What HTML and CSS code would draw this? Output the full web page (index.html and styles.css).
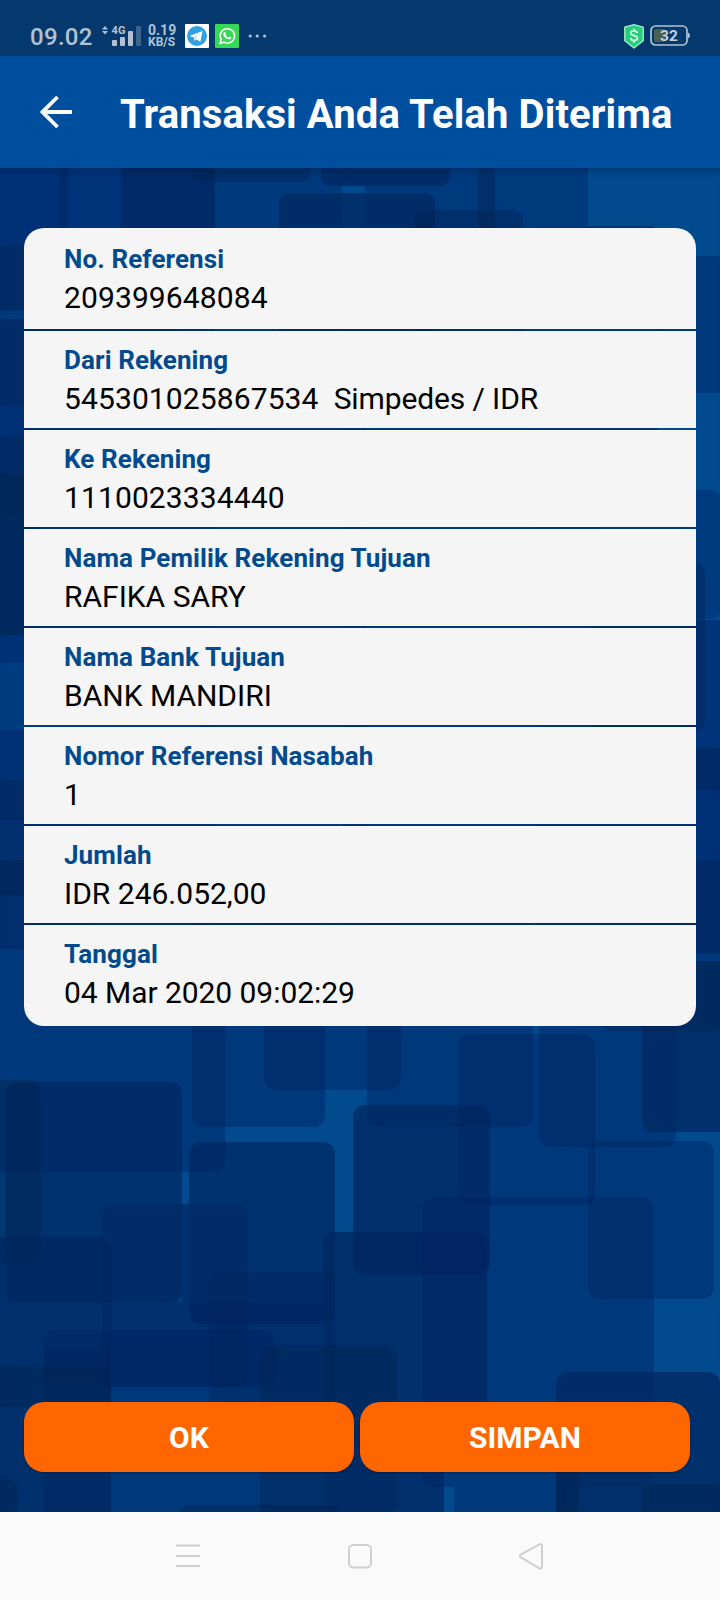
FILE: index.html
```html
<!DOCTYPE html>
<html lang="id">
<head>
<meta charset="utf-8">
<title>Transaksi Anda Telah Diterima</title>
<link rel="stylesheet" href="styles.css">
</head>
<body>
<div class="screen">
  <div class="status">
    <span class="clock">09.02</span>
    <svg class="signal" width="40" height="24" viewBox="0 0 40 24"><path d="M0 5.500 3 2l3 3.500zM0 7h6L3 10.500z"/><rect x="10" y="16" width="5" height="6" rx="1"/><rect x="18" y="13" width="5" height="9" rx="1"/><rect x="26" y="7" width="5" height="15" rx="1"/><rect x="34" y="2" width="5" height="20" rx="1" opacity=".32"/><text x="9.500" y="10.200" font-size="11" font-weight="700" textLength="14">4G</text></svg>
    <span class="rate"><span class="num">0.19</span><span class="unit">KB/S</span></span>
    <svg class="tg" width="24" height="24" viewBox="0 0 24 24"><rect width="24" height="24" rx="1" fill="#fff"/><circle cx="12" cy="12" r="10" fill="#2fa1de"/><path d="M4.500 12 17.500 7 15.300 18 11.500 15.300 9.500 17 9 13.600z" fill="#fff"/><path d="M9.300 13.500 14.500 9.600 10.400 14.400 9.700 16.300z" fill="#b5d7ec"/></svg>
    <svg class="wa" width="24" height="24" viewBox="0 0 24 24"><rect width="24" height="24" rx="1" fill="#36d955"/><path d="M5 19.300 6.100 15.500A7.200 7.200 0 1 1 8.800 18.200z" fill="none" stroke="#fff" stroke-width="1.500"/><path d="M9.400 8.200c.6-.5 1 0 1.700 1.600.1.400-.6 1-.6 1.200.7 1.300 1.500 2 2.800 2.500.4 0 .8-1.100 1.200-1 1.600.7 2 .9 1.900 1.300-.3 1.500-1.900 1.900-3.100 1.500-2.600-.8-4.300-2.600-5-4.600-.3-1 .3-2.100 1.100-2.500z" fill="#fff"/></svg>
    <svg class="dots" width="20" height="4" viewBox="0 0 20 4"><circle cx="2.200" cy="2" r="1.600"/><circle cx="9.200" cy="2" r="1.600"/><circle cx="16.600" cy="2" r="1.600"/></svg>
    <svg class="shield" width="20" height="25" viewBox="0 0 20 25"><path d="M.8 3.200 10 .7l9.200 2.500v13.500L10 23.900.8 16.700z" fill="#26cf7c" stroke="#b0f2cf" stroke-width="1.300"/><path d="M13.300 9.200c-.2-1.700-1.500-2.400-3.300-2.400s-3.200.8-3.200 2.300c0 3.500 6.600 1.500 6.600 5 0 1.600-1.500 2.400-3.400 2.400s-3.300-.9-3.400-2.600M10 4.500v2.300M10 16.500v2.300" fill="none" stroke="#d5fbe5" stroke-width="1.700"/></svg>
    <svg class="battery" width="40" height="22" viewBox="0 0 40 22"><rect x="1" y="1" width="36" height="19" rx="4.500" fill="none" stroke="#b3c1d3" stroke-width="1.700"/><path d="M38 7.500c2.500.8 2.500 5.200 0 6z" fill="#b3c1d3"/><rect x="4" y="4" width="11" height="13" rx="2.500" fill="#48624f"/><text x="19" y="16" font-size="15.500" font-weight="700" text-anchor="middle" fill="#c6d0de">32</text></svg>
  </div>
  <header class="bar">
    <svg class="back" width="34" height="34" viewBox="0 0 34 34"><path d="M32 17H2.500M17.500 2 2.500 17l15 15" fill="none" stroke="#fff" stroke-width="3.800"/></svg>
    <h1 class="title">Transaksi Anda Telah Diterima</h1>
  </header>
  <main class="content">
    <svg class="pattern" width="720" height="1344" viewBox="0 168 720 1344">
      <rect y="168" width="720" height="1344" fill="#004a8d"/>
      <g class="upper">
        <rect x="-20" y="150" width="240" height="850" fill="#003177"/>
        <rect x="59" y="150" width="9" height="90" fill="#002c6a"/>
        <rect x="68" y="150" width="53" height="90" fill="#00347a"/>
        <rect x="121" y="150" width="94" height="90" fill="#002b68"/>
        <rect x="215" y="150" width="127" height="800" fill="#00397c"/>
        <rect x="342" y="329" width="30" height="640" fill="#003177"/>
        <rect x="365" y="150" width="223" height="780" rx="8" fill="#003a7e"/>
        <rect x="342" y="150" width="24" height="36" fill="#00397c"/>
        <rect x="192" y="150" width="119" height="32" rx="10" class="t"/>
        <rect x="321" y="150" width="129" height="36" rx="10" class="s"/>
        <rect x="279" y="193" width="156" height="200" rx="10" class="s"/>
        <rect x="414" y="210" width="109" height="170" rx="10" class="t"/>
        <rect x="478" y="150" width="17" height="90" class="t"/>
        <rect x="535" y="226" width="123" height="790" rx="8" fill="#00357a"/>
        <rect x="0" y="246" width="130" height="65" fill="#002c68"/>
        <rect x="0" y="311" width="115" height="8" fill="#00397c"/>
        <rect x="0" y="319" width="180" height="87" fill="#002c68"/>
        <rect x="-20" y="435" width="60" height="210" fill="#002b66"/>
        <rect x="-20" y="474" width="44" height="161" rx="10" fill="#002a60"/>
        <rect x="-20" y="474" width="60" height="39" fill="#002859"/>
        <rect x="0" y="635" width="40" height="28" fill="#003177"/>
        <rect x="0" y="663" width="200" height="67" fill="#003c80"/>
        <rect x="0" y="780" width="90" height="40" fill="#002c68"/>
        <rect x="0" y="820" width="90" height="40" fill="#00306f"/>
        <rect x="0" y="860" width="90" height="35" fill="#002a5f"/>
        <rect x="0" y="895" width="90" height="54" fill="#002e6e"/>
        <rect x="658" y="256" width="62" height="137" fill="#00397c"/>
        <rect x="600" y="490" width="120" height="129" rx="9" fill="#003b80"/>
        <rect x="600" y="620" width="120" height="128" fill="#00347a"/>
        <rect x="590" y="563" width="115" height="168" rx="10" class="t"/>
        <rect x="640" y="748" width="80" height="42" fill="#002b66"/>
        <rect x="640" y="790" width="80" height="70" fill="#003076"/>
        <rect x="640" y="860" width="80" height="94" fill="#002b69"/>
        <rect x="640" y="954" width="80" height="7" fill="#00397c"/>
      </g>
      <rect x="0" y="949" width="640" height="72" fill="#004a8d"/>
      <rect x="600" y="961" width="120" height="60" fill="#004a8d"/>
      <g class="lower">
        <rect x="-60" y="949" width="285" height="223" rx="12" class="l"/>
        <rect x="192" y="900" width="133" height="227" rx="12" class="l"/>
        <rect x="264" y="900" width="137" height="190" rx="12" class="l"/>
        <rect x="367" y="900" width="166" height="227" rx="12" class="l"/>
        <rect x="458" y="1034" width="137" height="171" rx="12" class="l"/>
        <rect x="539" y="900" width="137" height="247" rx="12" class="l"/>
        <rect x="642" y="961" width="120" height="171" rx="12" class="s"/>
        <rect x="600" y="961" width="160" height="70" rx="12" class="t"/>
        <rect x="5" y="1082" width="177" height="221" rx="12" class="f"/>
        <rect x="-60" y="1080" width="101" height="183" rx="12" class="t"/>
        <rect x="-60" y="1237" width="171" height="330" rx="12" class="s"/>
        <rect x="189" y="1142" width="146" height="182" rx="12" class="f"/>
        <rect x="111" y="1303" width="212" height="230" class="l"/>
        <rect x="182" y="1204" width="7" height="99" class="l"/>
        <rect x="323" y="1232" width="164" height="208" rx="12" class="s"/>
        <rect x="353" y="1105" width="137" height="170" rx="12" class="s"/>
        <rect x="102" y="1204" width="146" height="183" rx="12" class="v"/>
        <rect x="44" y="1330" width="232" height="57" rx="12" class="v"/>
        <rect x="44" y="1350" width="67" height="180" class="v"/>
        <rect x="-60" y="1365" width="171" height="42" rx="12" class="t"/>
        <rect x="209" y="1272" width="126" height="168" rx="12" class="v"/>
        <rect x="260" y="1345" width="137" height="172" rx="12" class="t"/>
        <rect x="323" y="1440" width="121" height="80" class="s"/>
        <rect x="422" y="1197" width="232" height="290" rx="12" class="l"/>
        <rect x="588" y="1141" width="126" height="158" rx="12" class="l"/>
        <rect x="454" y="1487" width="112" height="40" class="l"/>
        <rect x="556" y="1372" width="164" height="160" rx="12" class="s"/>
        <rect x="-20" y="1478" width="38" height="60" rx="10" class="t"/>
        <rect x="180" y="1505" width="160" height="40" rx="8" class="t"/>
        <rect x="556" y="1440" width="23" height="80" class="t"/>
        <rect x="641" y="1484" width="100" height="50" rx="10" class="t"/>
      </g>
    </svg>
    <dl class="card">
      <div class="row"><dt>No. Referensi</dt><dd class="digits">209399648084</dd></div>
      <div class="row"><dt>Dari Rekening</dt><dd><span class="digits">545301025867534&nbsp; </span><span class="kind">Simpedes / IDR</span></dd></div>
      <div class="row"><dt>Ke Rekening</dt><dd class="digits">1110023334440</dd></div>
      <div class="row"><dt>Nama Pemilik Rekening Tujuan</dt><dd>RAFIKA SARY</dd></div>
      <div class="row"><dt>Nama Bank Tujuan</dt><dd>BANK MANDIRI</dd></div>
      <div class="row"><dt>Nomor Referensi Nasabah</dt><dd>1</dd></div>
      <div class="row"><dt>Jumlah</dt><dd>IDR 246.052,00</dd></div>
      <div class="row"><dt>Tanggal</dt><dd class="date">04 Mar 2020 09:02:29</dd></div>
    </dl>
    <div class="actions"><button class="btn">OK</button><button class="btn">SIMPAN</button></div>
  </main>
  <nav class="nav">
    <svg width="26" height="26" viewBox="0 0 26 26"><path d="M1 2.500h24M1 13h24M1 23h24"/></svg>
    <svg width="26" height="26" viewBox="0 0 26 26"><rect x="2" y="2" width="22" height="22.500" rx="4.500"/></svg>
    <svg width="26" height="28" viewBox="0 0 26 28"><path d="M21 2.100 1.500 12.700Q-.1 13.900 1.500 15.100L21 26.500Q23 27.200 23 24.800V3.800Q23 1.400 21 2.100z"/></svg>
  </nav>
</div>
</body>
</html>
```
FILE: styles.css
```css
* { box-sizing: border-box; margin: 0; }
body { font-family: Roboto, "Noto Sans", sans-serif; background: #004a8d; }
.screen { width: 720px; height: 1600px; display: flex; flex-direction: column; overflow: hidden; }

.status { height: 56px; flex: none; padding: 24px 30px 0; background: #05396d; display: flex; align-items: flex-start; color: #b3c1d3; }
.clock { width: 72px; font-size: 24px; line-height: 26px; font-weight: 500; letter-spacing: .3px; white-space: nowrap; }
.signal { fill: #b3c1d3; font-family: Roboto, sans-serif; }
.rate { width: 43px; padding-left: 6px; display: flex; flex-direction: column; font-weight: 700; white-space: nowrap; }
.num { font-size: 14px; line-height: 13px; }
.unit { font-size: 12px; line-height: 11px; }
.wa { margin-left: 6px; }
.dots { margin: 10px 0 0 9px; fill: #b3c1d3; }
.shield { margin-left: auto; }
.battery { margin: 1px 0 0 6px; font-family: Roboto, sans-serif; }

.bar { height: 112px; flex: none; display: flex; align-items: center; padding-left: 40px; background: #004f9f; }
.title { margin-left: 46px; padding-top: 5px; font-size: 40px; line-height: 49px; font-weight: 700; letter-spacing: .12px; color: #fff; white-space: nowrap; }

.content { position: relative; height: 1344px; flex: none; display: flex; flex-direction: column; justify-content: space-between; padding: 60px 24px 40px; box-shadow: inset 0 8px 8px -6px rgba(0, 20, 60, .4); }
.pattern { position: absolute; top: 0; left: 0; z-index: -1; }
.l { fill: rgba(0, 32, 98, .4); }
.f { fill: rgba(0, 36, 94, .62); }
.s { fill: rgba(0, 38, 94, .68); }
.t { fill: rgba(0, 36, 82, .42); }
.v { fill: rgba(0, 36, 92, .4); }

.card { display: flex; flex-direction: column; gap: 2px; border-radius: 20px; overflow: hidden; }
.row { height: 97px; padding: 11px 40px 0; background: #f5f5f5; white-space: nowrap; }
.row:first-child { height: 101px; padding-top: 13px; }
.row:last-child { height: 101px; }
.row dt { font-size: 26px; line-height: 36px; font-weight: 700; letter-spacing: .1px; color: #004a8d; }
.row dd { padding-top: 1px; font-size: 30px; line-height: 40px; color: #000; }
.row .digits { letter-spacing: .11px; }
.kind { letter-spacing: -.12px; }
.row .date { letter-spacing: -.05px; }

.actions { display: flex; gap: 6px; padding-right: 6px; }
.btn { width: 330px; height: 70px; border: 0; border-radius: 20px; background: #ff6600; color: #fff; font: 700 30px/69px Roboto, sans-serif; padding: 1px 0 0; box-shadow: 0 1px 3px rgba(0, 20, 60, .5); }

.nav { height: 88px; flex: none; display: flex; justify-content: space-between; align-items: center; padding: 0 175px; background: #fafafa; }
.nav svg { fill: none; stroke: #cfcfcf; stroke-width: 2; }
```
